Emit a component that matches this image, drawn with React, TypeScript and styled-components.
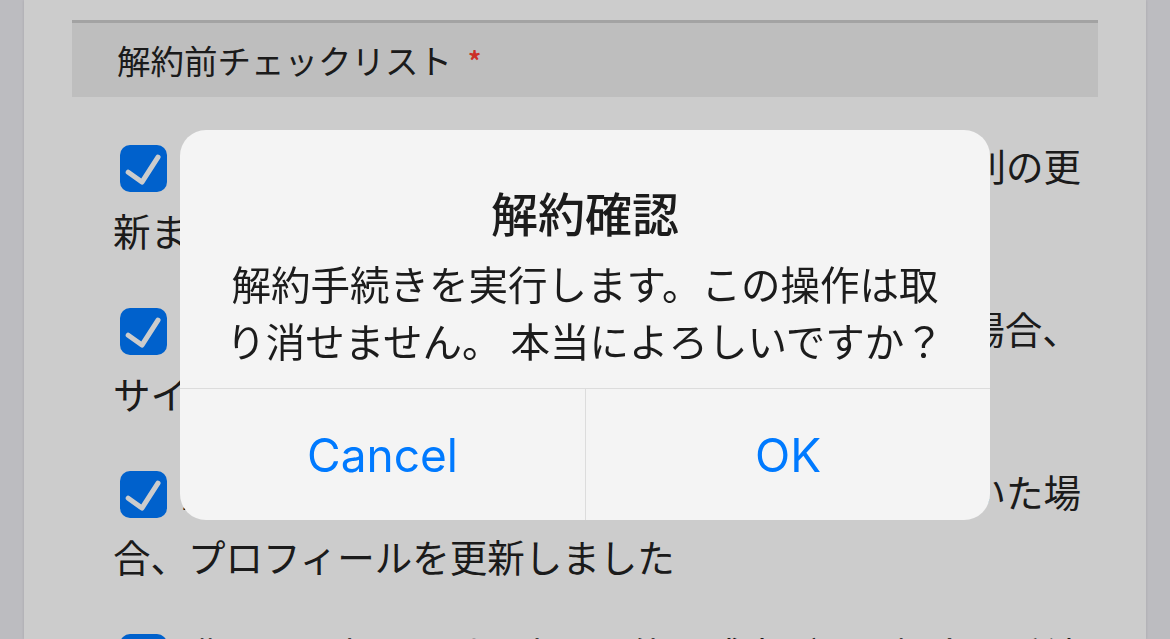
import React from 'react'
import styled, { createGlobalStyle } from 'styled-components'

const GlobalStyle = createGlobalStyle`
    html, body {
        margin: 0;
        height: 100%;
        overflow: hidden;
    }
    body {
        font-family: "Noto Sans CJK JP", "Noto Sans", sans-serif;
        background: #ecebf1;
    }
`

const Page = styled.div`
    display: flex;
    height: 100vh;
    padding: 0 24px;
    box-sizing: border-box;
    background: #ecebf1;
`

const Card = styled.div`
    flex: 1;
    background: #ffffff;
    padding: 20px 48px 0;
    box-shadow: 0 0 3px rgba(0, 0, 0, 0.12);
    overflow: hidden;
`

const SectionHeader = styled.div`
    display: flex;
    align-items: center;
    height: 74px;
    padding-left: 45px;
    border-top: 3px solid #cccccc;
    background: #eeeeee;
    color: #222222;
    font-size: 33.5px;
    line-height: 1;
`

const Required = styled.span`
    align-self: flex-start;
    margin: 24px 0 0 16px;
    color: #ff3b30;
    font-size: 26px;
    font-weight: 700;
`

const Checklist = styled.div`
    display: flex;
    flex-direction: column;
    gap: 33px;
    padding: 35px 0 0 41px;
`

const Item = styled.label`
    display: block;
    color: #222222;
    font-size: 37.5px;
    line-height: 65px;
`

const Box = styled.span<{ $checked: boolean }>`
    display: inline-flex;
    align-items: center;
    justify-content: center;
    width: 47px;
    height: 47px;
    margin: 0 14px 0 7px;
    border-radius: 10px;
    vertical-align: middle;
    position: relative;
    top: -2px;
    background: ${p => (p.$checked ? '#007aff' : '#ffffff')};
    border: ${p => (p.$checked ? 'none' : '2px solid #8e8e93')};
    box-sizing: border-box;
`

const Overlay = styled.div`
    position: fixed;
    inset: 0;
    display: flex;
    align-items: center;
    justify-content: center;
    padding-top: 11px;
    background: rgba(0, 0, 0, 0.2);
`

const Alert = styled.div`
    width: 810px;
    border-radius: 26px;
    background: #f4f4f4;
    overflow: hidden;
`

const AlertBody = styled.div`
    padding: 56px 40px 20px;
    text-align: center;
    color: #1c1c1c;
`

const AlertTitle = styled.div`
    font-size: 47px;
    font-weight: 500;
    line-height: 52px;
    margin-bottom: 16px;
`

const AlertMessage = styled.div`
    font-size: 39.5px;
    line-height: 57px;
`

const Actions = styled.div`
    display: grid;
    grid-template-columns: 1fr 1fr;
    border-top: 1px solid #dcdcdc;
`

const Action = styled.button`
    height: 131px;
    border: none;
    background: transparent;
    color: #007aff;
    font-family: Inter, "Liberation Sans", sans-serif;
    font-size: 46px;
    padding: 0;
    cursor: pointer;

    & + & {
        border-left: 1px solid #dcdcdc;
    }
`

const items = [
    '登録中のサービス内容と利用料金を確認し、規則の更新まで待つ必要がないことを確認しました',
    '解約後も有効なポイントや特典が残されている場合、サイト内で使い切るか移行手続きを行いました',
    '登録したメールアドレスや住所に変更が生じていた場合、プロフィールを更新しました',
    '購入した商品や引き出し可能な残高がある場合、手続きを完了しました',
]

const Check = () => (
    <svg width="47" height="47" viewBox="0 0 24 24" fill="none">
        <path d="M4.2 13.9l7 5L19.4 6.2" stroke="#ffffff" strokeWidth="2.6" strokeLinecap="round" strokeLinejoin="round" />
    </svg>
)

const App = () => {
    return (
        <>
            <GlobalStyle />
            <Page>
                <Card>
                    <SectionHeader>
                        解約前チェックリスト
                        <Required>*</Required>
                    </SectionHeader>
                    <Checklist>
                        {items.map((text, index) => (
                            <Item key={index}>
                                <Box $checked>
                                    <Check />
                                </Box>
                                {text}
                            </Item>
                        ))}
                    </Checklist>
                </Card>
            </Page>
            <Overlay>
                <Alert role="alertdialog">
                    <AlertBody>
                        <AlertTitle>解約確認</AlertTitle>
                        <AlertMessage>解約手続きを実行します。この操作は取り消せません。 本当によろしいですか？</AlertMessage>
                    </AlertBody>
                    <Actions>
                        <Action>Cancel</Action>
                        <Action>OK</Action>
                    </Actions>
                </Alert>
            </Overlay>
        </>
    )
}

export default App
